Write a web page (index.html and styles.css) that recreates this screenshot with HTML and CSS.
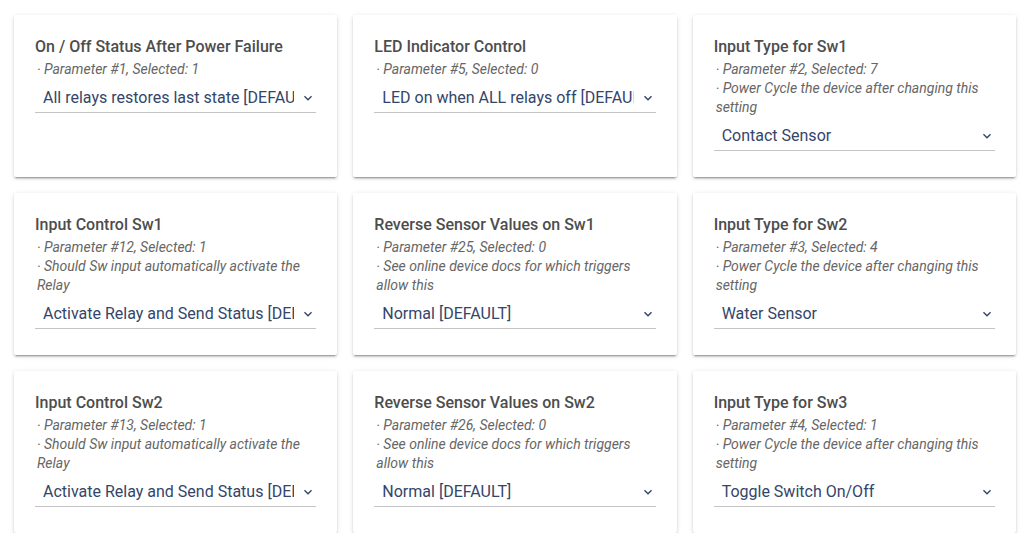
FILE: index.html
```html
<!DOCTYPE html>
<html lang="en">
<head>
<meta charset="utf-8">
<title>Device Parameters</title>
<link rel="stylesheet" href="styles.css">
</head>
<body>
<main class="grid">
  <section class="card">
    <h3 class="title">On / Off Status After Power Failure</h3>
    <div class="notes"><div>· Parameter #1, Selected: 1</div></div>
    <div class="select"><span class="value">All relays restores last state [DEFAULT]</span><svg class="chev" viewBox="0 0 24 24"><path d="M7.41 8.59L12 13.17l4.59-4.58L18 10l-6 6-6-6 1.41-1.41z"/></svg></div>
  </section>
  <section class="card">
    <h3 class="title">LED Indicator Control</h3>
    <div class="notes"><div>· Parameter #5, Selected: 0</div></div>
    <div class="select"><span class="value">LED on when ALL relays off [DEFAULT]</span><svg class="chev" viewBox="0 0 24 24"><path d="M7.41 8.59L12 13.17l4.59-4.58L18 10l-6 6-6-6 1.41-1.41z"/></svg></div>
  </section>
  <section class="card">
    <h3 class="title">Input Type for Sw1</h3>
    <div class="notes"><div>· Parameter #2, Selected: 7</div><div>· Power Cycle the device after changing this setting</div></div>
    <div class="select"><span class="value">Contact Sensor</span><svg class="chev" viewBox="0 0 24 24"><path d="M7.41 8.59L12 13.17l4.59-4.58L18 10l-6 6-6-6 1.41-1.41z"/></svg></div>
  </section>

  <section class="card">
    <h3 class="title">Input Control Sw1</h3>
    <div class="notes"><div>· Parameter #12, Selected: 1</div><div>· Should Sw input automatically activate the Relay</div></div>
    <div class="select"><span class="value">Activate Relay and Send Status [DEFAULT]</span><svg class="chev" viewBox="0 0 24 24"><path d="M7.41 8.59L12 13.17l4.59-4.58L18 10l-6 6-6-6 1.41-1.41z"/></svg></div>
  </section>
  <section class="card">
    <h3 class="title">Reverse Sensor Values on Sw1</h3>
    <div class="notes"><div>· Parameter #25, Selected: 0</div><div>· See online device docs for which triggers allow this</div></div>
    <div class="select"><span class="value">Normal [DEFAULT]</span><svg class="chev" viewBox="0 0 24 24"><path d="M7.41 8.59L12 13.17l4.59-4.58L18 10l-6 6-6-6 1.41-1.41z"/></svg></div>
  </section>
  <section class="card">
    <h3 class="title">Input Type for Sw2</h3>
    <div class="notes"><div>· Parameter #3, Selected: 4</div><div>· Power Cycle the device after changing this setting</div></div>
    <div class="select"><span class="value">Water Sensor</span><svg class="chev" viewBox="0 0 24 24"><path d="M7.41 8.59L12 13.17l4.59-4.58L18 10l-6 6-6-6 1.41-1.41z"/></svg></div>
  </section>

  <section class="card">
    <h3 class="title">Input Control Sw2</h3>
    <div class="notes"><div>· Parameter #13, Selected: 1</div><div>· Should Sw input automatically activate the Relay</div></div>
    <div class="select"><span class="value">Activate Relay and Send Status [DEFAULT]</span><svg class="chev" viewBox="0 0 24 24"><path d="M7.41 8.59L12 13.17l4.59-4.58L18 10l-6 6-6-6 1.41-1.41z"/></svg></div>
  </section>
  <section class="card">
    <h3 class="title">Reverse Sensor Values on Sw2</h3>
    <div class="notes"><div>· Parameter #26, Selected: 0</div><div>· See online device docs for which triggers allow this</div></div>
    <div class="select"><span class="value">Normal [DEFAULT]</span><svg class="chev" viewBox="0 0 24 24"><path d="M7.41 8.59L12 13.17l4.59-4.58L18 10l-6 6-6-6 1.41-1.41z"/></svg></div>
  </section>
  <section class="card">
    <h3 class="title">Input Type for Sw3</h3>
    <div class="notes"><div>· Parameter #4, Selected: 1</div><div>· Power Cycle the device after changing this setting</div></div>
    <div class="select"><span class="value">Toggle Switch On/Off</span><svg class="chev" viewBox="0 0 24 24"><path d="M7.41 8.59L12 13.17l4.59-4.58L18 10l-6 6-6-6 1.41-1.41z"/></svg></div>
  </section>
</main>
</body>
</html>
```

FILE: styles.css
```css
html, body {
  margin: 0;
  padding: 0;
  background: #ffffff;
  font-family: Roboto, "Liberation Sans", Arial, sans-serif;
}

.grid {
  display: grid;
  grid-template-columns: repeat(3, minmax(0, 1fr));
  gap: 16px;
  padding: 15px 13px 0 14px;
}

.card {
  min-width: 0;
  background: #ffffff;
  border-radius: 2px;
  box-shadow: 0 3px 1px -2px rgba(0, 0, 0, 0.2), 0 2px 2px 0 rgba(0, 0, 0, 0.14), 0 1px 5px 0 rgba(0, 0, 0, 0.12);
  padding: 20px 21px 26px 21px;
  display: flex;
  flex-direction: column;
}

.title {
  margin: 0;
  font-size: 16px;
  font-weight: 500;
  line-height: 24px;
  color: #4d4d4d;
}

.notes {
  padding-top: 1px;
  font-size: 14px;
  font-style: italic;
  line-height: 19px;
  color: #666666;
  padding-left: 2px;
}

.select {
  margin-top: 5px;
  display: flex;
  align-items: center;
  height: 28px;
  border-bottom: 1px solid #c4c4c4;
  color: #34456a;
}

.value {
  flex: 1;
  min-width: 0;
  overflow: hidden;
  white-space: nowrap;
  text-overflow: clip;
  font-size: 16px;
  line-height: 28px;
  padding-left: 8px;
}

.chev {
  width: 16px;
  height: 16px;
  margin-left: 6px;
  fill: #34456a;
  flex: none;
}
```
